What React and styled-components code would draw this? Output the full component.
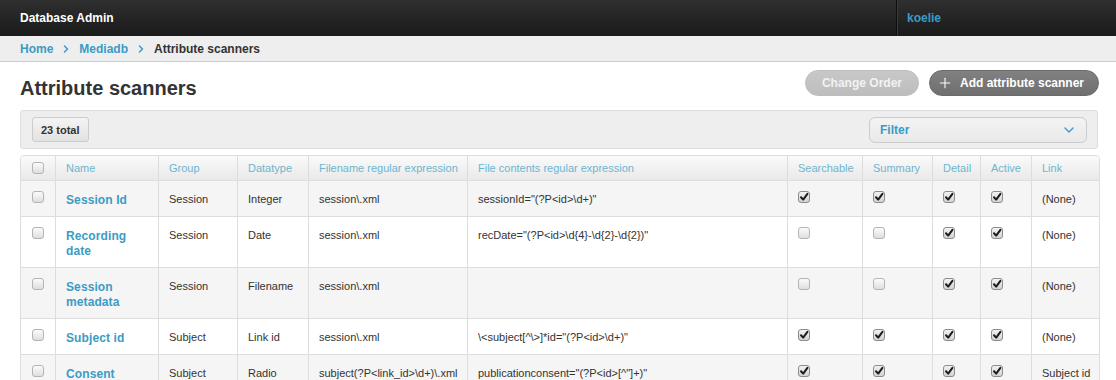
import React from "react";
import styled, { createGlobalStyle } from "styled-components";
import { ChevronDown, ChevronRight, Plus } from "lucide-react";

const Global = createGlobalStyle`
  html, body { margin: 0; padding: 0; background: #fff; }
  body { font-family: "Liberation Sans", Arial, Helvetica, sans-serif; color: #333; }
  * { box-sizing: border-box; }
`;

const LINK = "#3a9cc6";

const TopBar = styled.header`
  display: flex;
  height: 36px;
  background: linear-gradient(#2f2f2f, #1a1a1a);
`;
const Brand = styled.div`
  flex: 1;
  display: flex;
  align-items: center;
  padding-left: 20px;
  font-size: 12px;
  font-weight: bold;
  color: #fff;
`;
const UserArea = styled.div`
  width: 220px;
  display: flex;
  align-items: center;
  padding-left: 10px;
  border-left: 1px solid #0e0e0e;
  box-shadow: inset 1px 0 0 #3a3a3a;
  font-size: 12px;
  font-weight: bold;
  color: ${LINK};
`;

const Crumbs = styled.nav`
  display: flex;
  align-items: center;
  gap: 7px;
  height: 26px;
  padding: 0 20px;
  background: #eeeeee;
  border-bottom: 1px solid #cccccc;
  font-size: 12px;
  font-weight: bold;
`;
const Crumb = styled.span`
  color: ${(p) => (p.$current ? "#333" : LINK)};
`;
const Sep = styled(ChevronRight)`
  color: ${LINK};
`;

const Main = styled.main`
  padding: 0 18px 0 20px;
`;
const TitleRow = styled.div`
  display: flex;
  justify-content: space-between;
  align-items: flex-start;
  padding-top: 8px;
`;
const Title = styled.h1`
  margin: 6px 0 0;
  font-size: 20px;
  line-height: 24px;
  font-weight: bold;
  color: #333;
`;
const Actions = styled.div`
  display: flex;
  gap: 10px;
  margin-right: -1px;
`;
const PillButton = styled.button`
  display: flex;
  align-items: center;
  gap: 7px;
  height: 26px;
  border-radius: 13px;
  padding: ${(p) => (p.$primary ? "0 14px 0 7px" : "0 16px")};
  border: 1px solid ${(p) => (p.$primary ? "#6a6a6a" : "#bdbdbd")};
  background: ${(p) =>
    p.$primary
      ? "linear-gradient(#818181, #6f6f6f)"
      : "linear-gradient(#c8c8c8, #bdbdbd)"};
  color: ${(p) => (p.$primary ? "#fff" : "#f2f2f2")};
  font-family: inherit;
  font-size: 12px;
  font-weight: bold;
  cursor: pointer;
`;

const Well = styled.div`
  display: flex;
  justify-content: space-between;
  align-items: flex-start;
  margin-top: 10px;
  padding: 6px 10px 5px 11px;
  background: #eeeeee;
  border: 1px solid #dddddd;
  border-radius: 3px;
`;
const CountButton = styled.button`
  height: 25px;
  padding: 0 8px;
  border: 1px solid #cccccc;
  border-radius: 3px;
  background: linear-gradient(#f4f4f4, #e2e2e2);
  font-family: inherit;
  font-size: 11px;
  font-weight: bold;
  color: #333;
`;
const Select = styled.div`
  display: flex;
  align-items: center;
  justify-content: space-between;
  width: 218px;
  height: 26px;
  padding: 0 9px 0 10px;
  border: 1px solid #cccccc;
  border-radius: 6px;
  background: linear-gradient(#f3f3f3, #e9e9e9);
  font-size: 12px;
  font-weight: bold;
  color: ${LINK};
`;

const Table = styled.table`
  width: 100%;
  margin-top: 6px;
  table-layout: fixed;
  border-collapse: separate;
  border-spacing: 0;
  border: 1px solid #dddddd;
  border-radius: 4px;
  overflow: hidden;
  font-size: 11px;
`;
const HeadCell = styled.th`
  padding: 5px 10px 4px;
  line-height: 15px;
  font-weight: normal;
  text-align: ${(p) => (p.$center ? "center" : "left")};
  color: #6db5cf;
  background: linear-gradient(#fafafa, #e9e9e9);
  border-left: ${(p) => (p.$first ? "none" : "1px solid #dddddd")};
  white-space: nowrap;
  overflow: hidden;
`;
const Row = styled.tr`
  background: ${(p) => (p.$odd ? "#f5f5f5" : "#ffffff")};
`;
const Cell = styled.td`
  padding: ${(p) => (p.$name ? "12px 10px 8px" : "9px 10px 7px")};
  line-height: ${(p) => (p.$name ? "15px" : "18px")};
  vertical-align: top;
  text-align: ${(p) => (p.$center ? "center" : "left")};
  border-top: 1px solid #dddddd;
  border-left: ${(p) => (p.$first ? "none" : "1px solid #dddddd")};
  color: #333;
  white-space: ${(p) => (p.$name ? "normal" : "nowrap")};
`;
const NameLink = styled.a`
  font-size: 12px;
  font-weight: bold;
  color: ${LINK};
  text-decoration: none;
  letter-spacing: 0.1px;
`;
const Box = styled.span`
  display: inline-block;
  vertical-align: top;
  width: 12px;
  height: 12px;
  margin-top: 1px;
  border-radius: 3px;
  border: 1px solid ${(p) => (p.$checked ? "#8c8c8c" : "#b4b4b4")};
  background: ${(p) =>
    p.$checked
      ? "linear-gradient(#f2f2f2, #d2d2d2)"
      : "linear-gradient(#fbfbfb, #dedede)"};
  position: relative;
`;
const CheckMark = styled.svg`
  position: absolute;
  left: 0;
  top: 0;
`;

function Checkbox({ checked }) {
  return (
    <Box $checked={checked}>
      {checked && (
        <CheckMark width="10" height="10" viewBox="0 0 10 10">
          <path d="M2 5.2 L4.2 7.6 L8.4 1.8" fill="none" stroke="#1c1c1c" strokeWidth="2" strokeLinecap="round" strokeLinejoin="round" />
        </CheckMark>
      )}
    </Box>
  );
}

const cols = [34, 103, 79, 71, 159, 320, 75, 70, 48, 51, 68];
const heads = [
  "Name",
  "Group",
  "Datatype",
  "Filename regular expression",
  "File contents regular expression",
  "Searchable",
  "Summary",
  "Detail",
  "Active",
  "Link",
];

const rows = [
  ["Session Id", "Session", "Integer", "session\\.xml", 'sessionId="(?P<id>\\d+)"', [1, 1, 1, 1], "(None)"],
  ["Recording date", "Session", "Date", "session\\.xml", 'recDate="(?P<id>\\d{4}-\\d{2}-\\d{2})"', [0, 0, 1, 1], "(None)"],
  ["Session metadata", "Session", "Filename", "session\\.xml", "", [0, 0, 1, 1], "(None)"],
  ["Subject id", "Subject", "Link id", "session\\.xml", '\\<subject[^\\>]*id="(?P<id>\\d+)"', [1, 1, 1, 1], "(None)"],
  ["Consent", "Subject", "Radio", "subject(?P<link_id>\\d+)\\.xml", 'publicationconsent="(?P<id>[^"]+)"', [1, 1, 1, 1], "Subject id"],
];

export default function App() {
  return (
    <>
      <Global />
      <TopBar>
        <Brand>Database Admin</Brand>
        <UserArea>koelie</UserArea>
      </TopBar>
      <Crumbs>
        <Crumb>Home</Crumb>
        <Sep size={12} strokeWidth={3} />
        <Crumb>Mediadb</Crumb>
        <Sep size={12} strokeWidth={3} />
        <Crumb $current>Attribute scanners</Crumb>
      </Crumbs>
      <Main>
        <TitleRow>
          <Title>Attribute scanners</Title>
          <Actions>
            <PillButton>Change Order</PillButton>
            <PillButton $primary>
              <Plus size={16} strokeWidth={1.6} />
              Add attribute scanner
            </PillButton>
          </Actions>
        </TitleRow>
        <Well>
          <CountButton>23 total</CountButton>
          <Select>
            Filter
            <ChevronDown size={16} strokeWidth={2} />
          </Select>
        </Well>
        <Table>
          <colgroup>
            {cols.map((w, i) => (
              <col key={i} style={{ width: w }} />
            ))}
          </colgroup>
          <thead>
            <tr>
              <HeadCell $first $center>
                <Checkbox />
              </HeadCell>
              {heads.map((h) => (
                <HeadCell key={h}>{h}</HeadCell>
              ))}
            </tr>
          </thead>
          <tbody>
            {rows.map((r, i) => (
              <Row key={r[0]} $odd={i % 2 === 0}>
                <Cell $first $center>
                  <Checkbox />
                </Cell>
                <Cell $name>
                  <NameLink href="#">{r[0]}</NameLink>
                </Cell>
                <Cell>{r[1]}</Cell>
                <Cell>{r[2]}</Cell>
                <Cell>{r[3]}</Cell>
                <Cell>{r[4]}</Cell>
                {r[5].map((c, j) => (
                  <Cell key={j}>
                    <Checkbox checked={!!c} />
                  </Cell>
                ))}
                <Cell>{r[6]}</Cell>
              </Row>
            ))}
          </tbody>
        </Table>
      </Main>
    </>
  );
}
